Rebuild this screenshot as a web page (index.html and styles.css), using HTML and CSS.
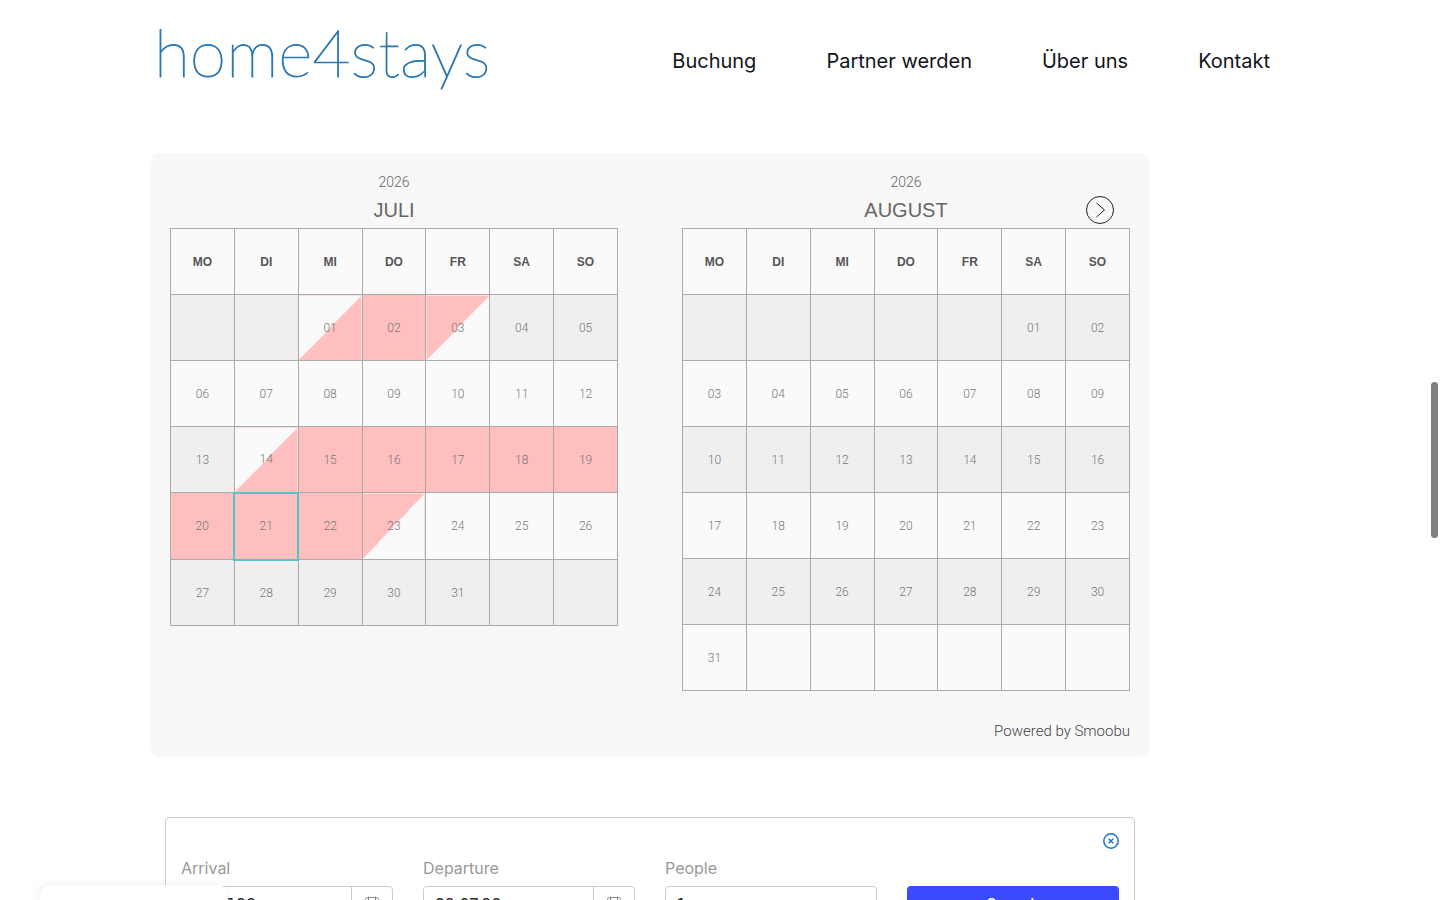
FILE: index.html
```html
<!DOCTYPE html>
<html lang="de">
<head>
  <meta charset="UTF-8">
  <meta name="viewport" content="width=device-width, initial-scale=1.0">
  <title>home4stays</title>
  <link rel="stylesheet" href="styles.css">
</head>
<body>

<header class="site-header">
  <a href="#" class="logo">home4stays</a>
  <nav class="main-nav">
    <a href="#">Buchung</a>
    <a href="#">Partner werden</a>
    <a href="#">Über uns</a>
    <a href="#">Kontakt</a>
  </nav>
</header>

<main class="content">
  <section class="calendar">
    <div class="months">
      <div class="month">
        <div class="year">2026</div>
        <div class="month-head">
          <h2>JULI</h2>
        </div>
        <table>
          <thead>
            <tr><th>MO</th><th>DI</th><th>MI</th><th>DO</th><th>FR</th><th>SA</th><th>SO</th></tr>
          </thead>
          <tbody>
            <tr><td></td><td></td><td class="check-in">01</td><td class="booked">02</td><td class="check-out">03</td><td>04</td><td>05</td></tr>
            <tr><td>06</td><td>07</td><td>08</td><td>09</td><td>10</td><td>11</td><td>12</td></tr>
            <tr><td>13</td><td class="check-in">14</td><td class="booked">15</td><td class="booked">16</td><td class="booked">17</td><td class="booked">18</td><td class="booked">19</td></tr>
            <tr><td class="booked">20</td><td class="booked today">21</td><td class="booked">22</td><td class="check-out">23</td><td>24</td><td>25</td><td>26</td></tr>
            <tr><td>27</td><td>28</td><td>29</td><td>30</td><td>31</td><td></td><td></td></tr>
          </tbody>
        </table>
      </div>

      <div class="month">
        <div class="year">2026</div>
        <div class="month-head">
          <h2>AUGUST</h2>
          <button type="button" class="next" aria-label="Next month">
            <svg width="28" height="28" viewBox="0 0 28 28" fill="none" stroke="#222">
              <circle cx="14" cy="14" r="13.5"/>
              <path d="M10.5 7 L18.5 14 L10.5 21"/>
            </svg>
          </button>
        </div>
        <table>
          <thead>
            <tr><th>MO</th><th>DI</th><th>MI</th><th>DO</th><th>FR</th><th>SA</th><th>SO</th></tr>
          </thead>
          <tbody>
            <tr><td></td><td></td><td></td><td></td><td></td><td>01</td><td>02</td></tr>
            <tr><td>03</td><td>04</td><td>05</td><td>06</td><td>07</td><td>08</td><td>09</td></tr>
            <tr><td>10</td><td>11</td><td>12</td><td>13</td><td>14</td><td>15</td><td>16</td></tr>
            <tr><td>17</td><td>18</td><td>19</td><td>20</td><td>21</td><td>22</td><td>23</td></tr>
            <tr><td>24</td><td>25</td><td>26</td><td>27</td><td>28</td><td>29</td><td>30</td></tr>
            <tr><td>31</td><td></td><td></td><td></td><td></td><td></td><td></td></tr>
          </tbody>
        </table>
      </div>
    </div>
    <a href="#" class="powered">Powered by Smoobu</a>
  </section>

  <form class="booking">
    <button type="button" class="close" aria-label="Close">
      <svg width="16" height="16" viewBox="0 0 16 16" fill="none" stroke="#1976c5" stroke-width="1.5">
        <circle cx="8" cy="8" r="7.2"/>
        <path d="M5.7 5.7 L10.3 10.3 M10.3 5.7 L5.7 10.3"/>
      </svg>
    </button>
    <div class="fields">
      <div class="field">
        <label for="arrival">Arrival</label>
        <div class="date-box">
          <input type="text" id="arrival" name="arrival" value="21.07.26">
          <button type="button" aria-label="Pick arrival">
            <svg width="16" height="16" viewBox="0 0 16 16" fill="none" stroke="#888">
              <rect x="1.5" y="1.5" width="13" height="13" rx="2"/>
              <path d="M1.5 4.5 H14.5 M4.5 0.5 V4 M11.5 0.5 V4"/>
            </svg>
          </button>
        </div>
      </div>
      <div class="field">
        <label for="departure">Departure</label>
        <div class="date-box">
          <input type="text" id="departure" name="departure" value="22.07.26">
          <button type="button" aria-label="Pick departure">
            <svg width="16" height="16" viewBox="0 0 16 16" fill="none" stroke="#888">
              <rect x="1.5" y="1.5" width="13" height="13" rx="2"/>
              <path d="M1.5 4.5 H14.5 M4.5 0.5 V4 M11.5 0.5 V4"/>
            </svg>
          </button>
        </div>
      </div>
      <div class="field">
        <label for="people">People</label>
        <input type="text" id="people" name="people" value="1">
      </div>
      <button type="submit" class="search">Search</button>
    </div>
  </form>
</main>

<div class="popup"></div>
<div class="scrollbar"></div>

</body>
</html>
```

FILE: styles.css
```css
* {
  box-sizing: border-box;
}

body {
  margin: 0;
  height: 100vh;
  overflow: hidden;
  background: #fff;
  font-family: Inter, sans-serif;
}

a {
  text-decoration: none;
}

button {
  padding: 0;
  border: none;
  background: none;
  cursor: pointer;
}

svg {
  display: block;
}

/* Header */
.site-header {
  display: flex;
  justify-content: space-between;
  align-items: center;
  max-width: 1140px;
  height: 122px;
  margin: 0 auto;
  padding: 0 20px 0 4px;
}

.logo {
  padding-bottom: 18px;
  font-family: Lato, sans-serif;
  font-weight: 100;
  font-size: 66px;
  line-height: 80px;
  color: #2b78b3;
  -webkit-text-stroke: 1px #2b78b3;
}

.main-nav {
  display: flex;
  gap: 70px;
}

.main-nav a {
  font-size: 20px;
  line-height: 28px;
  color: #111418;
}

/* Calendar */
.content {
  max-width: 1140px;
  margin: 31px auto 0;
}

.calendar {
  max-width: 1000px;
  padding: 19px 20px 14px;
  border-radius: 10px;
  background: #f8f8f8;
}

.months {
  display: flex;
  align-items: flex-start;
  gap: 64px;
}

.month {
  flex: 1;
  color: #666;
}

.year {
  font-family: Roboto, sans-serif;
  font-weight: 300;
  font-size: 14px;
  line-height: 20px;
  text-align: center;
}

.month-head {
  display: grid;
  grid-template-columns: 1fr auto 1fr;
  align-items: center;
  height: 36px;
}

.month-head h2 {
  grid-column: 2;
  margin: 0;
  font-family: "Liberation Sans", Arial, sans-serif;
  font-weight: 400;
  font-size: 20px;
  line-height: 28px;
}

.next {
  justify-self: end;
  margin-right: 16px;
}

table {
  width: 100%;
  table-layout: fixed;
  border-collapse: collapse;
  background: #fafafa;
}

th,
td {
  height: 66px;
  padding: 0;
  border: 1px solid #aaa;
  text-align: center;
  font-size: 12px;
}

th {
  font-family: "Liberation Sans", Arial, sans-serif;
  color: #555;
}

td {
  font-family: Roboto, sans-serif;
  font-weight: 300;
  color: #777;
}

tbody tr:nth-child(odd) {
  background: #efefef;
}

.booked {
  background: #ffbfbf;
}

.check-in {
  background: linear-gradient(to bottom right, #fafafa 50%, #ffbfbf 50%);
}

.check-out {
  background: linear-gradient(to bottom right, #ffbfbf 50%, #fafafa 50%);
}

.today {
  height: 67px;
  border: 2px solid #4ec8c8;
}

.powered {
  display: block;
  margin-top: 28px;
  font-family: Roboto, sans-serif;
  font-weight: 300;
  font-size: 15px;
  line-height: 24px;
  text-align: right;
  color: #444;
}

/* Booking form */
.booking {
  max-width: 970px;
  margin: 60px 15px 0;
  padding: 15px;
  border: 1px solid #ccc;
  border-radius: 4px;
}

.close {
  display: block;
  margin-left: auto;
}

.fields {
  display: grid;
  grid-template-columns: repeat(4, 1fr);
  align-items: end;
  gap: 30px;
}

.field label {
  display: block;
  margin: 7px 0 6px;
  font-size: 16px;
  line-height: 24px;
  color: #999;
}

.field input {
  width: 100%;
  height: 36px;
  padding: 0 11px;
  border: 1px solid #ccc;
  border-radius: 4px;
  font-family: Inter, sans-serif;
  font-weight: 500;
  font-size: 16px;
  color: #333;
}

.date-box {
  display: flex;
  border: 1px solid #ccc;
  border-radius: 4px;
}

.field .date-box input {
  flex: 1;
  min-width: 0;
  height: 34px;
  border: none;
}

.date-box button {
  display: flex;
  justify-content: center;
  align-items: center;
  width: 41px;
  border-left: 1px solid #ccc;
}

.search {
  height: 36px;
  border-radius: 4px;
  background: #3b49ff;
  color: #fff;
  font-family: Inter, sans-serif;
  font-weight: 500;
  font-size: 16px;
}

/* Floating box at the bottom edge */
.popup {
  position: fixed;
  left: 40px;
  bottom: 0;
  width: 188px;
  height: 15px;
  border-radius: 10px 10px 0 0;
  background: #fff;
  box-shadow: -2px 0 10px rgba(0, 0, 0, 0.07);
}

.scrollbar {
  position: fixed;
  top: 382px;
  right: 2px;
  width: 7px;
  height: 156px;
  border-radius: 4px;
  background: #7f7f7f;
}
```
